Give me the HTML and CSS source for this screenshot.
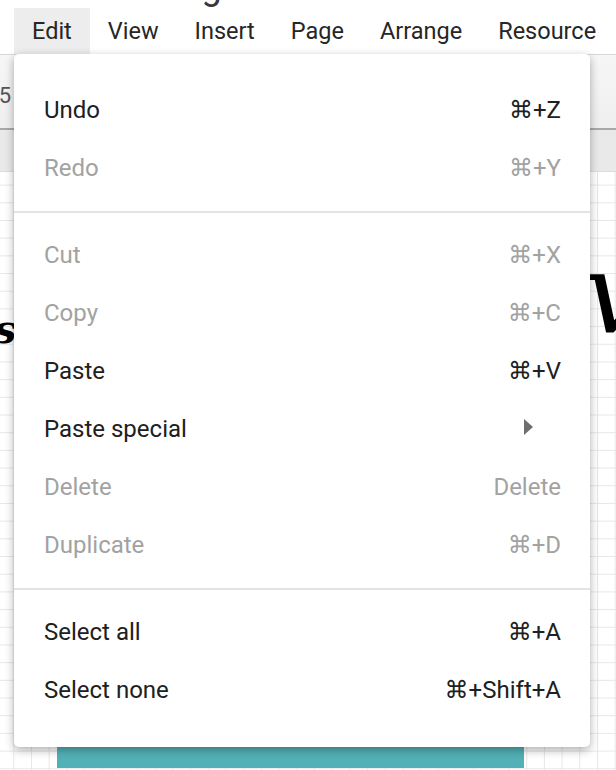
FILE: index.html
```html
<!DOCTYPE html>
<html lang="en">
<head>
<meta charset="utf-8">
<title>Edit menu</title>
<link rel="stylesheet" href="styles.css">
</head>
<body>
<div class="app">
  <div class="titlebar"><span class="title">Untitled Diagram</span></div>
  <nav class="menubar">
    <span class="mitem active">Edit</span>
    <span class="mitem">View</span>
    <span class="mitem">Insert</span>
    <span class="mitem">Page</span>
    <span class="mitem">Arrange</span>
    <span class="mitem">Resource</span>
  </nav>
  <div class="toolbar"><span class="zoomval">125</span></div>
  <div class="tabbar"></div>
  <div class="canvas">
    <div class="shape-teal"></div>
    <span class="ink ink-left">s</span>
    <span class="ink ink-right">v</span>
  </div>

  <div class="menu">
    <div class="menu-item"><span class="label">Undo</span><span class="key">⌘+Z</span></div>
    <div class="menu-item disabled"><span class="label">Redo</span><span class="key">⌘+Y</span></div>
    <div class="menu-sep"></div>
    <div class="menu-item disabled"><span class="label">Cut</span><span class="key">⌘+X</span></div>
    <div class="menu-item disabled"><span class="label">Copy</span><span class="key">⌘+C</span></div>
    <div class="menu-item"><span class="label">Paste</span><span class="key">⌘+V</span></div>
    <div class="menu-item"><span class="label">Paste special</span><span class="submenu-arrow"></span></div>
    <div class="menu-item disabled"><span class="label">Delete</span><span class="key">Delete</span></div>
    <div class="menu-item disabled"><span class="label">Duplicate</span><span class="key">⌘+D</span></div>
    <div class="menu-sep"></div>
    <div class="menu-item"><span class="label">Select all</span><span class="key">⌘+A</span></div>
    <div class="menu-item"><span class="label">Select none</span><span class="key">⌘+Shift+A</span></div>
  </div>
</div>
</body>
</html>
```

FILE: styles.css
```css
* { box-sizing: border-box; }

html, body {
  margin: 0;
  padding: 0;
  background: #ffffff;
}

body {
  font-family: Roboto, "DejaVu Sans", sans-serif;
  color: #222222;
}

.app {
  position: relative;
  width: 616px;
  height: 770px;
  overflow: hidden;
  display: flex;
  flex-direction: column;
}

/* title row: only the descender of the title peeks in */
.titlebar {
  height: 8px;
  overflow: hidden;
  flex: none;
  padding-left: 17px;
}

.title {
  display: block;
  font-size: 36px;
  line-height: 36px;
  margin-top: -31px;
  color: #3a3a3a;
  white-space: nowrap;
}

/* menu bar */
.menubar {
  height: 46px;
  flex: none;
  display: flex;
  padding-left: 14px;
  background: #ffffff;
}

.mitem {
  padding: 0 18px;
  font-size: 23.5px;
  line-height: 46px;
  color: #262626;
  white-space: nowrap;
}

.mitem.active {
  background: #ededed;
}

/* toolbar under the menu bar */
.toolbar {
  height: 76px;
  flex: none;
  border-top: 1px solid #d9d9d9;
  border-bottom: 2px solid #a8a8a8;
  background: linear-gradient(#f6f6f6, #efefef);
  display: flex;
  align-items: center;
}

.zoomval {
  margin-left: -26px;
  margin-top: 8px;
  font-size: 22px;
  color: #555555;
  white-space: nowrap;
}

.tabbar {
  height: 42px;
  flex: none;
  background: #e9e9e9;
  border-bottom: 1px solid #dddddd;
}

/* drawing canvas with grid */
.canvas {
  position: relative;
  flex: 1;
  background-color: #ffffff;
  background-image:
    linear-gradient(to right, #e7e7e7 1px, transparent 1px),
    linear-gradient(to bottom, #e7e7e7 1px, transparent 1px);
  background-size: 17.7px 17.7px;
  background-position: 13.3px 12.6px;
}

.shape-teal {
  position: absolute;
  left: 57px;
  top: 575px;
  width: 467px;
  height: 21px;
  background: #52b1b6;
}

.ink {
  position: absolute;
  font-family: "DejaVu Serif", serif;
  font-style: italic;
  color: #000000;
  line-height: 1;
}

.ink-left {
  left: -6px;
  top: 137px;
  font-size: 40px;
  font-weight: bold;
}

.ink-right {
  left: 584px;
  top: 66px;
  font-size: 112px;
}

/* dropdown menu */
.menu {
  position: absolute;
  left: 14px;
  top: 54px;
  width: 576px;
  padding: 27px 0 28px;
  background: #ffffff;
  border-radius: 5px;
  box-shadow: 0 3px 10px rgba(0, 0, 0, 0.32);
}

.menu-item {
  height: 58px;
  display: flex;
  align-items: center;
  justify-content: space-between;
  padding: 0 29px 0 30px;
  font-size: 24px;
  line-height: 58px;
  color: #202020;
  white-space: nowrap;
}

.menu-item.disabled {
  color: #a2a2a2;
}

.submenu-arrow {
  width: 0;
  height: 0;
  margin-right: 28px;
  border-left: 9px solid #6e6e6e;
  border-top: 8px solid transparent;
  border-bottom: 8px solid transparent;
  transform: translateY(-2px);
}

.menu-sep {
  height: 2px;
  margin: 14px 0 13px;
  background: #e3e3e3;
}
```
